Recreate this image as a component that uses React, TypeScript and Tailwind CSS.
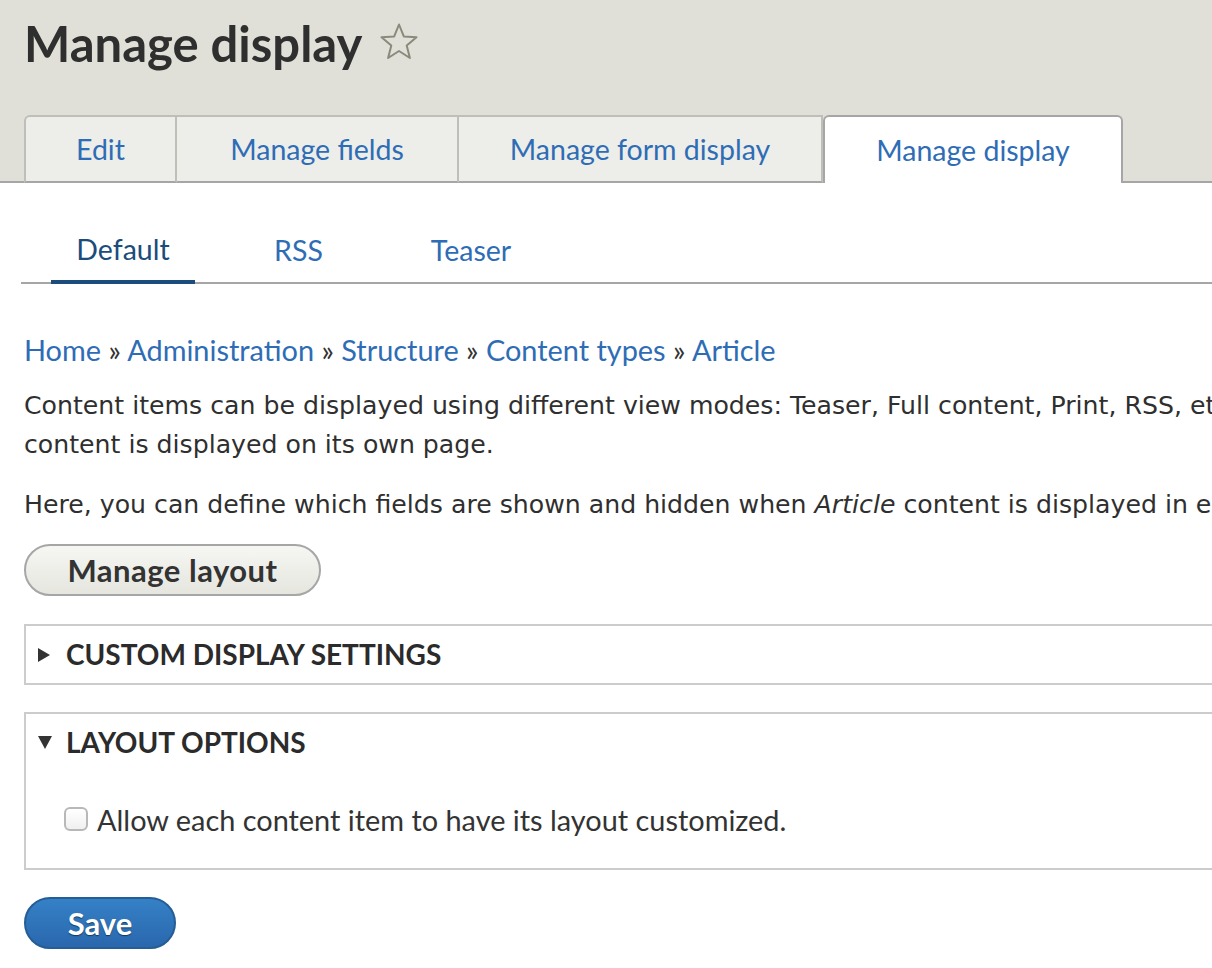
const font = { fontFamily: "Lato, 'Open Sans', sans-serif" };

const Star = () => (
  <svg width="38" height="37" viewBox="0 0 38 37" className="ml-[18px] mt-[8px]">
    <path
      d="M19 1.5 L23.8 13.4 L36.5 14.2 L26.7 22.4 L29.9 35 L19 28 L8.1 35 L11.3 22.4 L1.5 14.2 L14.2 13.4 Z"
      fill="none"
      stroke="#8a8a7c"
      strokeWidth="2"
      strokeLinejoin="round"
    />
  </svg>
);

const Caret = ({ open }: { open: boolean }) =>
  open ? (
    <svg width="14" height="14" viewBox="0 0 14 14">
      <path d="M0 1 L14 1 L7 14 Z" fill="#333" />
    </svg>
  ) : (
    <svg width="12" height="14" viewBox="0 0 12 14">
      <path d="M0 0 L12 7 L0 14 Z" fill="#333" />
    </svg>
  );

export default function App() {
  const primaryTabs = [
    { label: "Edit", w: "w-[153px]", first: true },
    { label: "Manage fields", w: "w-[282px]" },
    { label: "Manage form display", w: "w-[364px]" },
  ];
  const crumbs = ["Home", "Administration", "Structure", "Content types", "Article"];

  return (
    <div className="w-[1212px] h-[968px] overflow-hidden bg-white text-[#333]" style={font}>
      {/* header */}
      <div className="bg-[#e0e0d8] border-b-2 border-[#a6a6a6]">
        <div className="h-[115px] px-[24px] pt-[15px] flex items-start">
          <h1 className="text-[49px] leading-[56px] font-bold text-[#2f2f2f] whitespace-nowrap">Manage display</h1>
          <Star />
        </div>
        <div className="flex items-end pl-[24px] -mb-[2px]">
          {primaryTabs.map((t) => (
            <div
              key={t.label}
              className={`${t.w} h-[68px] flex items-center justify-center bg-[#ededea] border-2 border-l-0 border-[#bfbfba] border-b-[#a6a6a6] text-[28.5px] text-[#2e6db5] whitespace-nowrap ${
                t.first ? "border-l-2 rounded-tl-[6px]" : ""
              }`}
            >
              {t.label}
            </div>
          ))}
          <div className="w-[300px] h-[68px] flex items-center justify-center bg-white border-2 border-b-0 border-[#a6a6a6] rounded-t-[6px] text-[28.5px] text-[#2e6db5] whitespace-nowrap">
            Manage display
          </div>
        </div>
      </div>

      {/* secondary tabs */}
      <div className="mt-[33px] ml-[21px] w-[1300px] border-b-2 border-[#a6a6a6] flex pl-[30px]">
        <div className="w-[144px] h-[68px] pt-[2px] -mb-[2px] flex items-center justify-center border-b-4 border-[#1c4c7c] rounded-t-[3px] text-[28.5px] text-[#1c4c7c]">
          Default
        </div>
        <div className="ml-[55px] w-[97px] h-[66px] pt-[2px] flex items-center justify-center text-[28.5px] text-[#2e6db5]">RSS</div>
        <div className="ml-[56px] w-[136px] h-[66px] pt-[2px] flex items-center justify-center text-[28.5px] text-[#2e6db5]">Teaser</div>
      </div>

      {/* main */}
      <div className="px-[24px] w-[1800px] leading-[39px]">
        <div className="mt-[46px] whitespace-nowrap text-[28.9px]">
          {crumbs.map((c, i) => (
            <span key={c}>
              <span className="text-[#2e6db5]">{c}</span>
              {i < crumbs.length - 1 && <span className="text-[#333]"> » </span>}
            </span>
          ))}
        </div>
        <div className="text-[25.2px] text-[#2f2f2f]" style={{ fontFamily: "'DejaVu Sans', sans-serif" }}>
          <p className="mt-[17px] whitespace-nowrap">
            Content items can be displayed using different view modes: Teaser, Full content, Print, RSS, etc. Teaser is a
            short format that is typically used in lists of multiple content items. Full content is typically used when the
            <br />
            content is displayed on its own page.
          </p>
          <p className="mt-[21px] whitespace-nowrap">
            Here, you can define which fields are shown and hidden when <em>Article</em> content is displayed in each view
            mode, and define how the fields are displayed in each view mode.
          </p>
        </div>

        <button className="mt-[20px] w-[297px] h-[52px] rounded-full border-2 border-[#a6a6a6] bg-gradient-to-b from-[#f6f6f3] to-[#e6e6df] text-[31px] tracking-[0.5px] font-bold text-[#333] flex items-center justify-center">
          Manage layout
        </button>

        <div className="mt-[28px] h-[61px] border-2 border-[#cccccc] flex items-center pl-[12px]">
          <Caret open={false} />
          <span className="ml-[16px] text-[28px] font-bold uppercase text-[#2b2b2b]">Custom display settings</span>
        </div>

        <div className="mt-[27px] h-[158px] border-2 border-[#cccccc] pl-[12px]">
          <div className="h-[56px] flex items-center">
            <Caret open={true} />
            <span className="ml-[14px] text-[28px] font-bold uppercase text-[#2b2b2b]">Layout options</span>
          </div>
          <div className="mt-[29px] ml-[26px] flex items-center h-[40px]">
            <span className="w-[24px] h-[24px] rounded-[6px] border-2 border-[#b8b8b8] bg-gradient-to-b from-white to-[#f0f0f0]" />
            <span className="ml-[9px] text-[28.9px] text-[#333]">Allow each content item to have its layout customized.</span>
          </div>
        </div>

        <button className="mt-[27px] w-[152px] h-[52px] rounded-full border-2 border-[#255d96] bg-gradient-to-b from-[#3581c6] to-[#2a67ad] text-[31px] font-bold text-white flex items-center justify-center [text-shadow:0_1px_1px_rgba(0,0,0,0.5)]">
          Save
        </button>
      </div>
    </div>
  );
}
